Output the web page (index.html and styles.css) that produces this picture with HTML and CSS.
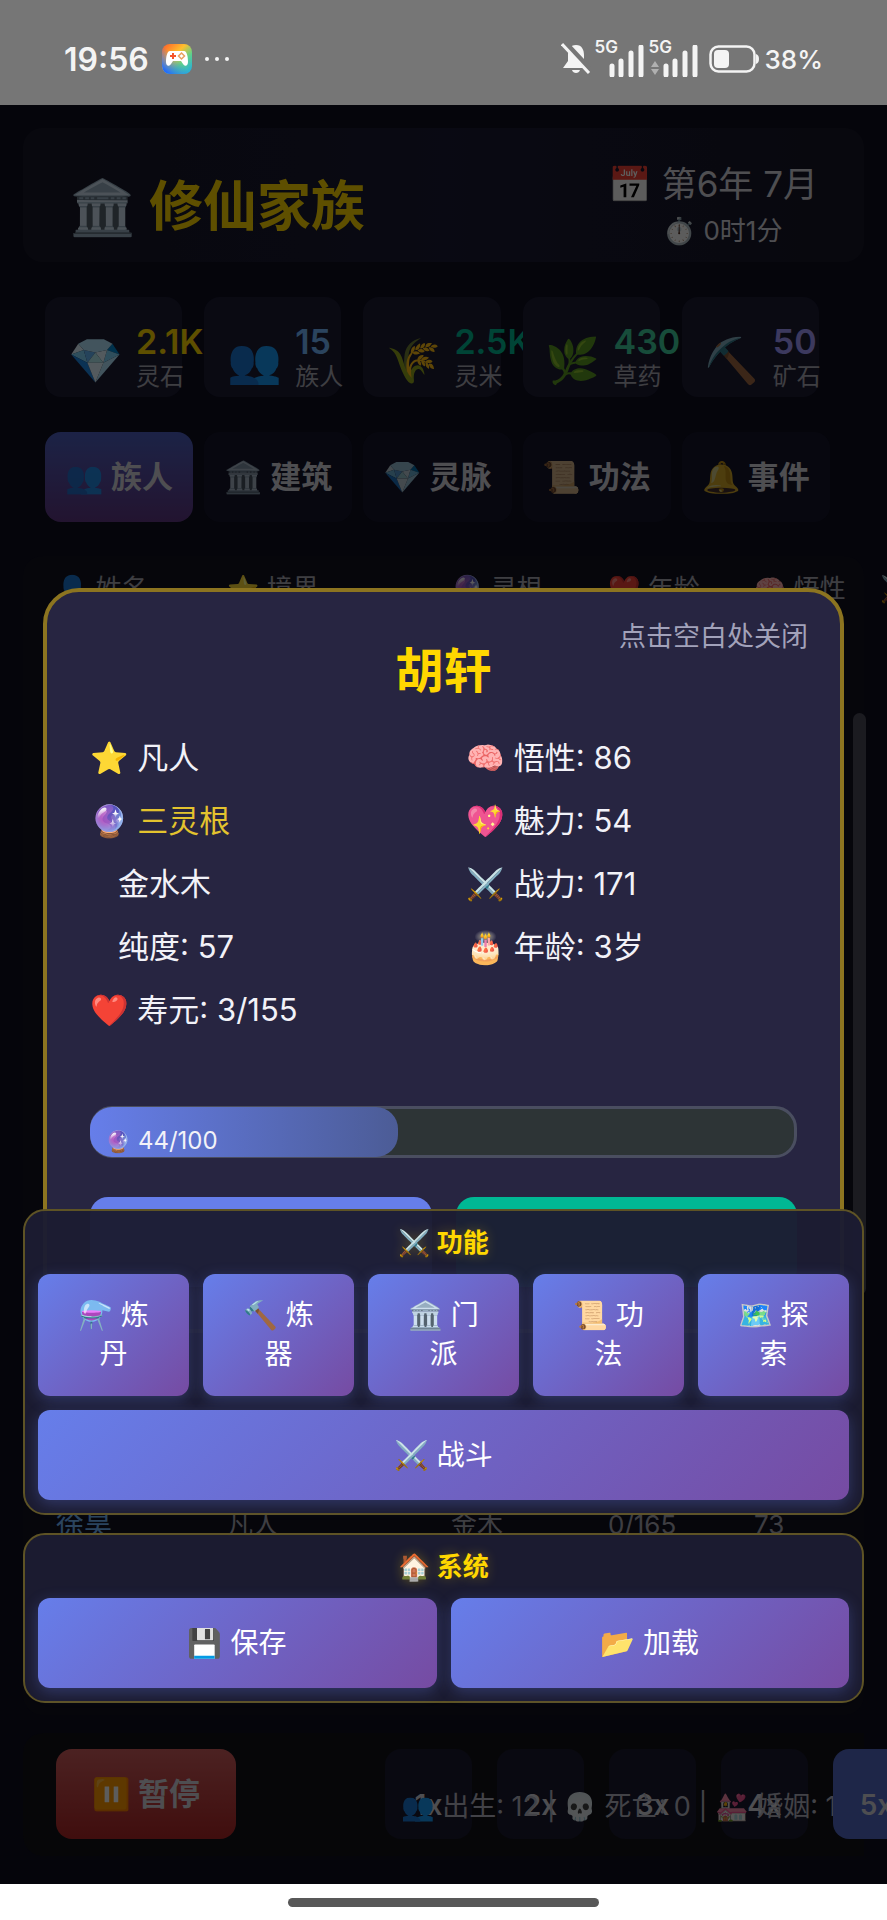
FILE: index.html
```html
<!DOCTYPE html>
<html lang="zh-CN">
<head>
<meta charset="utf-8">
<meta name="viewport" content="width=device-width, initial-scale=1">
<title>修仙家族</title>
<link rel="stylesheet" href="styles.css">
</head>
<body>
<header class="status">
  <span class="clock">19:56</span>
  <svg class="game-icon" viewBox="0 0 30 30" width="30" height="30">
    <defs>
      <linearGradient id="g1" x1="0" y1="0" x2="1" y2="1"><stop offset="0" stop-color="#ff5a2a"/><stop offset=".4" stop-color="#ffc02e"/><stop offset=".65" stop-color="#5fd08a"/><stop offset="1" stop-color="#18a8f0"/></linearGradient>
      <linearGradient id="g2" x1="1" y1="0" x2="0" y2="1"><stop offset=".5" stop-color="#2b7bff" stop-opacity="0"/><stop offset=".9" stop-color="#1f6bff"/></linearGradient>
    </defs>
    <rect width="30" height="30" rx="8" fill="url(#g1)"/>
    <rect width="30" height="30" rx="8" fill="url(#g2)"/>
    <path d="M8 7h14c3 0 4 6 4 11 0 4-3 5-5 2l-2-3h-8l-2 3c-2 3-5 2-5-2 0-5 1-11 4-11z" fill="#fff"/>
    <path d="M11 9v6M8 12h6" stroke="#f5552c" stroke-width="2"/>
    <path d="M19.500 9l3 3-3 3-3-3z" fill="none" stroke="#e9a060" stroke-width="1.500"/>
  </svg>
  <span class="dots"><i></i><i></i><i></i></span>
  <div class="status-right">
    <svg viewBox="0 0 30 34" width="30" height="34">
      <path d="M15 3c-6 0-8 5-8 10v6l-5 7h26l-5-7v-6c0-5-2-10-8-10z" fill="#f4f4f4"/>
      <path d="M11 28h8c-1 4-7 4-8 0z" fill="#f4f4f4"/>
      <path d="M3 0l27 29" stroke="#767676" stroke-width="6"/>
      <path d="M1 2l27 29" stroke="#f4f4f4" stroke-width="3"/>
    </svg>
    <span class="signal"><b>5G</b>
      <svg viewBox="0 0 36 32" width="36" height="32"><path d="M3 21v9M12 16v14M22 8v22M32 2v28" stroke="#f4f4f4" stroke-width="5" stroke-linecap="round"/></svg>
    </span>
    <span class="signal"><b>5G</b>
      <svg viewBox="0 0 36 32" width="36" height="32"><path d="M3 21v9M12 16v14M22 8v22M32 2v28" stroke="#f4f4f4" stroke-width="5" stroke-linecap="round"/></svg>
      <svg class="updown" viewBox="0 0 8 14" width="8" height="14"><path d="M4 0l4 6H0zM4 14L0 8h8z" fill="#b0b0b0"/></svg>
    </span>
    <svg class="battery" viewBox="0 0 51 28" width="51" height="28"><rect x="1.500" y="1.500" width="44" height="25" rx="8" fill="none" stroke="#f4f4f4" stroke-width="2.500"/><rect x="5" y="5" width="15" height="18" rx="4" fill="#f4f4f4"/><path d="M47 9c4 1 4 9 0 10z" fill="#f4f4f4"/></svg>
    <span class="percent">38%</span>
  </div>
</header>

<main class="app">
  <section class="titlebar">
    <h1><span class="emoji">🏛️</span> 修仙家族</h1>
    <div class="date">
      <div class="month"><span class="emoji">📅</span> 第6年 7月</div>
      <div class="time"><span class="emoji">⏱️</span> 0时1分</div>
    </div>
  </section>

  <section class="stats">
    <div class="stat"><span class="emoji">💎</span><div><strong class="gold">2.1K</strong><span>灵石</span></div></div>
    <div class="stat"><span class="emoji">👥</span><div><strong class="blue">15</strong><span>族人</span></div></div>
    <div class="stat"><span class="emoji">🌾</span><div><strong class="green">2.5K</strong><span>灵米</span></div></div>
    <div class="stat"><span class="emoji">🌿</span><div><strong class="mint">430</strong><span>草药</span></div></div>
    <div class="stat"><span class="emoji">⛏️</span><div><strong class="violet">50</strong><span>矿石</span></div></div>
  </section>

  <nav class="tabs">
    <button class="active" type="button"><span class="emoji">👥</span> 族人</button>
    <button type="button"><span class="emoji">🏛️</span> 建筑</button>
    <button type="button"><span class="emoji">💎</span> 灵脉</button>
    <button type="button"><span class="emoji">📜</span> 功法</button>
    <button type="button"><span class="emoji">🔔</span> 事件</button>
  </nav>

  <section class="roster">
    <table>
      <colgroup><col class="c-name"><col class="c-realm"><col class="c-root"><col class="c-age"><col class="c-wit"><col class="c-power"></colgroup>
      <thead><tr>
        <th><span class="emoji">👤</span> 姓名</th><th><span class="emoji">⭐</span> 境界</th><th><span class="emoji">🔮</span> 灵根</th><th><span class="emoji">❤️</span> 年龄</th><th><span class="emoji">🧠</span> 悟性</th><th><span class="emoji">⚔️</span></th>
      </tr></thead>
      <tbody><tr><td class="name">徐昊</td><td>凡人</td><td>金木</td><td>0/165</td><td>73</td><td></td></tr></tbody>
    </table>
  </section>

  <footer class="controls">
    <button class="pause" type="button"><span class="emoji">⏸️</span> 暂停</button>
    <div class="speeds">
      <button type="button">1x</button><button type="button">2x</button><button type="button">3x</button><button type="button">4x</button><button class="on" type="button">5x</button>
    </div>
    <p class="tally"><span class="emoji">👥</span> 出生: 12 | <span class="emoji">💀</span> 死亡: 0 | <span class="emoji">💒</span> 婚姻: 1</p>
  </footer>

  <div class="scrim"></div>
  <div class="scrollbar"></div>

  <section class="modal">
    <span class="hint">点击空白处关闭</span>
    <h2>胡轩</h2>
    <div class="attrs">
      <ul>
        <li><span class="emoji">⭐</span> 凡人</li>
        <li class="root"><span class="emoji">🔮</span> 三灵根</li>
        <li class="sub">金水木</li>
        <li class="sub">纯度: 57</li>
        <li><span class="emoji">❤️</span> 寿元: 3/155</li>
      </ul>
      <ul>
        <li><span class="emoji">🧠</span> 悟性: 86</li>
        <li><span class="emoji">💖</span> 魅力: 54</li>
        <li><span class="emoji">⚔️</span> 战力: 171</li>
        <li><span class="emoji">🎂</span> 年龄: 3岁</li>
      </ul>
    </div>
    <div class="progress"><div class="fill" style="width:44%"></div><span><span class="emoji">🔮</span> 44/100</span></div>
    <div class="actions"><button class="primary" type="button"></button><button class="success" type="button"></button></div>
  </section>

  <div class="panels">
    <section class="panel">
      <h3><span class="emoji">⚔️</span> 功能</h3>
      <div class="grid five">
        <button type="button"><span class="emoji">⚗️</span> 炼<br>丹</button>
        <button type="button"><span class="emoji">🔨</span> 炼<br>器</button>
        <button type="button"><span class="emoji">🏛️</span> 门<br>派</button>
        <button type="button"><span class="emoji">📜</span> 功<br>法</button>
        <button type="button"><span class="emoji">🗺️</span> 探<br>索</button>
        <button class="wide" type="button"><span class="emoji">⚔️</span> 战斗</button>
      </div>
    </section>
    <section class="panel">
      <h3><span class="emoji">🏠</span> 系统</h3>
      <div class="grid two">
        <button type="button"><span class="emoji">💾</span> 保存</button>
        <button type="button"><span class="emoji">📂</span> 加载</button>
      </div>
    </section>
  </div>
</main>

<div class="home"><i></i></div>
</body>
</html>
```

FILE: styles.css
```css
* { box-sizing: border-box; }
body {
  margin: 0;
  min-height: 100vh;
  display: flex;
  flex-direction: column;
  overflow: hidden;
  background: #0e0e20;
  color: #d4d4dc;
  font-family: Inter, "Noto Sans CJK SC", "Noto Color Emoji", sans-serif;
}
button { font: inherit; color: inherit; border: 0; padding: 0; cursor: pointer; white-space: nowrap; }
h1, h2, h3, p, ul { margin: 0; padding: 0; }
.emoji { font-family: "Noto Color Emoji", sans-serif; font-weight: 400; }

/* status bar */
.status {
  height: 105px;
  padding: 13px 64px 0;
  display: flex;
  align-items: center;
  background: #767676;
  color: #f4f4f4;
}
.clock { font-size: 32px; font-weight: 600; }
.game-icon { margin-left: 13px; }
.dots { display: flex; gap: 6px; margin-left: 13px; }
.dots i { width: 4px; height: 4px; border-radius: 50%; background: #f4f4f4; }
.status-right { margin-left: auto; display: flex; align-items: center; }
.signal { position: relative; display: flex; justify-content: flex-end; width: 54px; padding-top: 3px; }
.signal b { position: absolute; left: 4px; top: -4px; font-size: 17px; line-height: 18px; font-weight: 600; }
.updown { position: absolute; left: 6px; bottom: 2px; }
.battery { margin-left: 10px; }
.percent { margin-left: 5px; font-size: 26px; font-weight: 500; }

/* game screen */
.app { position: relative; flex: 1; display: flex; flex-direction: column; padding: 23px 23px 28px; overflow: hidden; }
.titlebar {
  height: 134px;
  padding: 25px 46px 0 46px;
  display: flex;
  justify-content: space-between;
  align-items: center;
  border-radius: 20px;
  background: linear-gradient(90deg, #171726, #1a1a34 50%, #171726);
}
h1 { font-size: 54px; line-height: 64px; color: #ffd700; white-space: nowrap; }
.date { display: flex; flex-direction: column; align-items: center; white-space: nowrap; padding-bottom: 4px; }
.month { font-size: 35px; line-height: 48px; }
.time { padding-left: 20px; font-size: 26px; line-height: 42px; }

.stats, .tabs { display: grid; grid-template-columns: repeat(5, minmax(0, 1fr)); padding: 0 34px 0 22px; gap: 11px; }
.stats { margin-top: 35px; }
.stat {
  height: 100px;
  margin-right: 11px;
  padding: 22px 0 0 23px;
  display: flex;
  align-items: center;
  gap: 10px;
  border-radius: 16px;
  background: #1c1c33;
  white-space: nowrap;
}
.stat > .emoji { flex: none; font-size: 44px; width: 58px; padding-top: 6px; }
.stat div { display: flex; flex-direction: column; }
.stat strong { font-size: 34px; line-height: 38px; font-weight: 600; }
.stat div span { font-size: 24px; line-height: 32px; color: #a8a8b4; }
.gold { color: #ffd700; }
.blue { color: #74b9ff; }
.green { color: #00b894; }
.mint { color: #3ecf9e; }
.violet { color: #a29bfe; }

.tabs { margin-top: 35px; }
.tabs button { height: 90px; padding-bottom: 6px; border-radius: 16px; background: #15152a; font-size: 31px; font-weight: 700; }
.tabs .active { background: linear-gradient(#4c5fbe, #5f3682); }
.tabs .emoji { opacity: .8; }

.roster { flex: 1; margin-top: 34px; padding: 13px 12px 0 33px; border-radius: 20px; background: #12121f; display: flex; }
table { border-collapse: collapse; table-layout: fixed; width: 950px; flex: none; margin-right: -200px; }
th, td { padding: 0; text-align: left; font-size: 26px; line-height: 36px; font-weight: 400; white-space: nowrap; color: #a8a8b4; }
thead { height: 40px; }
td { vertical-align: bottom; padding-bottom: 172px; }
.name { color: #74b9ff; font-size: 28px; }
.c-name { width: 171px; }
.c-realm { width: 224px; }
.c-root { width: 157px; }
.c-age { width: 146px; }
.c-wit { width: 126px; }

.controls { position: relative; height: 123px; margin-top: 18px; padding: 16px 0 0 33px; display: flex; gap: 149px; background: #121218; border-radius: 20px 0 0 20px; }
.pause { flex: none; width: 180px; height: 90px; padding-bottom: 6px; border-radius: 16px; background: linear-gradient(#cd5c5c, #ad2626); font-size: 31px; font-weight: 700; }
.speeds { display: flex; gap: 25px; }
.speeds button { flex: none; width: 87px; height: 90px; padding-top: 22px; border-radius: 16px; background: #1a1a2e; font-size: 28px; font-weight: 600; }
.speeds .on { position: relative; z-index: 1; background: #5167c3; }
.tally { position: absolute; left: 378px; top: 54px; font-size: 27px; line-height: 40px; white-space: nowrap; color: #b4b4c0; }

/* overlay layers */
.scrim { position: absolute; inset: 0; z-index: 2; background: rgba(0, 0, 0, .63); }
.scrollbar { position: absolute; z-index: 3; right: 21px; top: 608px; width: 13px; height: 582px; border-radius: 7px; background: #1b1b20; }
.modal {
  position: absolute;
  z-index: 3;
  top: 483px;
  left: 43px;
  right: 43px;
  padding: 49px 43px 42px;
  border: 4px solid #8c7420;
  border-radius: 36px;
  background: #272541;
  color: #f2f2f8;
}
.hint { position: absolute; right: 32px; top: 25px; font-size: 27px; line-height: 40px; color: #a2a2ba; }
h2 { text-align: center; font-size: 48px; line-height: 60px; color: #ffd700; }
.attrs { margin-top: 25px; display: grid; grid-template-columns: 1fr 1fr; column-gap: 24px; }
ul { list-style: none; }
.attrs ul + ul { padding-left: 11px; }
li { font-size: 31px; line-height: 63px; height: 63px; white-space: nowrap; }
.root { color: #e3c32e; }
.sub { padding-left: 28px; }
.progress { position: relative; height: 52px; margin-top: 65px; border: 3px solid #4a4e60; border-radius: 22px; background: #2d3436; }
.fill { position: absolute; left: -3px; top: -2px; bottom: -2px; border-radius: 22px; background: linear-gradient(90deg, #667eea, #4c5c96); }
.progress > span { position: absolute; left: 12px; top: 15px; font-size: 24px; line-height: 34px; }
.progress .emoji { font-size: 21px; }
.actions { margin-top: 39px; display: grid; grid-template-columns: 1fr 1fr; gap: 24px; }
.actions button { height: 90px; border-radius: 18px; }
.primary { background: #667eea; }
.success { background: #00b894; }

.panels { position: absolute; z-index: 4; left: 23px; right: 23px; bottom: 181px; display: flex; flex-direction: column; gap: 18px; }
.panel { padding: 13px; border: 2px solid #5e5325; border-radius: 22px; background: rgba(28, 28, 50, .97); }
h3 { text-align: center; font-size: 26px; line-height: 38px; margin-bottom: 12px; color: #ffd700; text-shadow: 0 0 12px rgba(255, 215, 0, .3); }
.grid { display: grid; gap: 14px; }
.five { grid-template-columns: repeat(5, 1fr); }
.two { grid-template-columns: 1fr 1fr; }
.grid button {
  min-height: 90px;
  border-radius: 12px;
  background: linear-gradient(135deg, #667eea, #764ba2);
  box-shadow: 0 4px 15px rgba(102, 126, 234, .3);
  color: #fff;
  font-size: 28px;
  line-height: 39px;
}
.five button { min-height: 122px; }
.five .wide { grid-column: 1 / -1; min-height: 90px; }

/* system gesture bar */
.home { height: 36px; display: flex; justify-content: center; align-items: center; background: #fff; }
.home i { width: 35%; height: 9px; border-radius: 5px; background: #585858; }
```
